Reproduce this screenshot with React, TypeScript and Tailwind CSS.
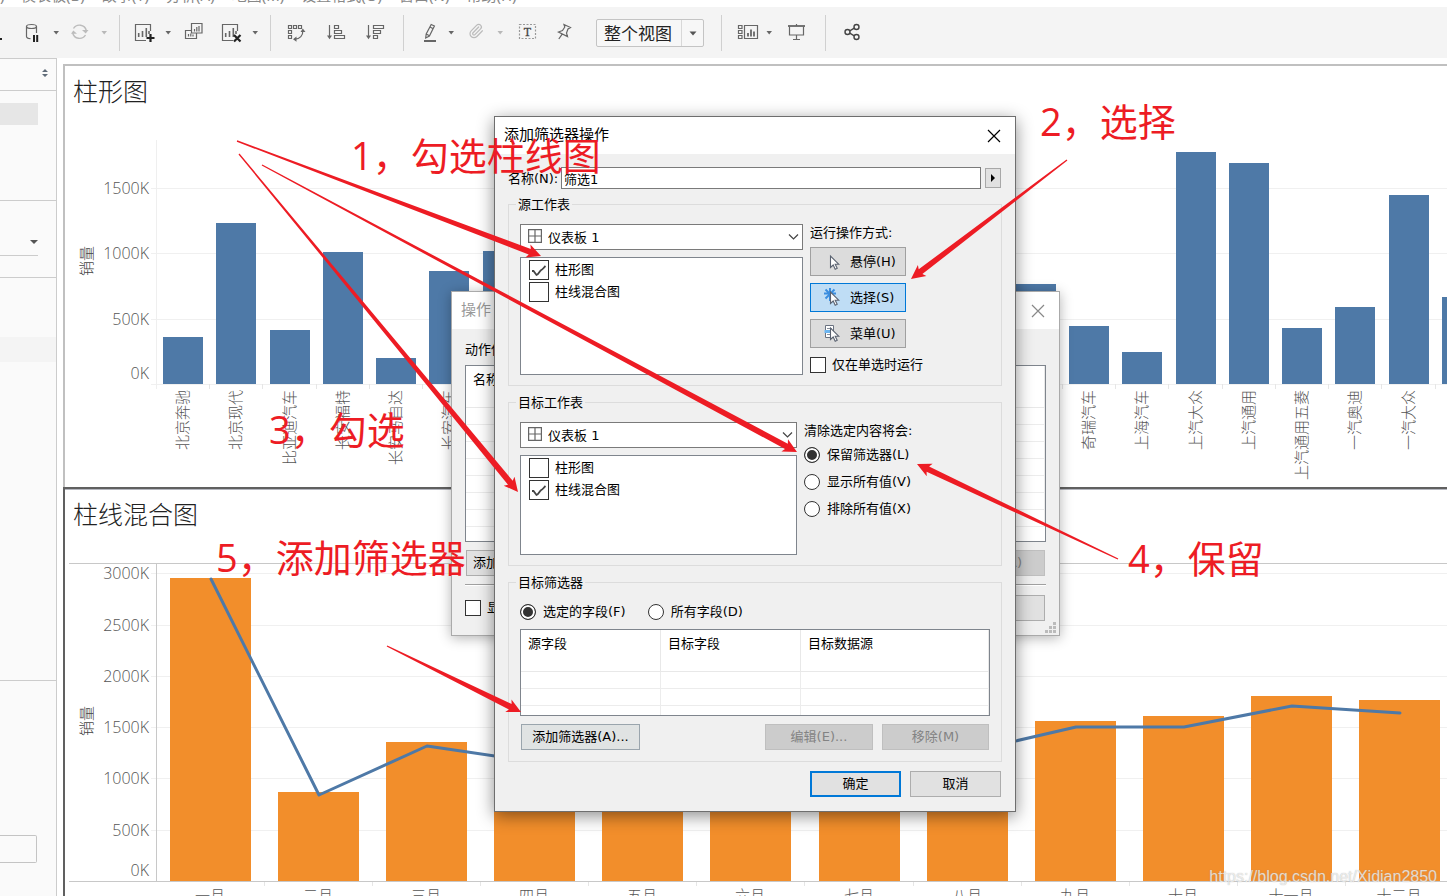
import React from "react";
import type { ReactNode } from "react";
import { Paperclip } from "lucide-react";

const INK = "#666666";

/* ---------- toolbar ---------- */

function Tool({ label, className, children }: { label: string; className: string; children: ReactNode }) {
  return (
    <button type="button" aria-label={label} className={`flex size-6 shrink-0 items-center justify-center ${className}`}>
      {children}
    </button>
  );
}

function Glyph({ children }: { children: ReactNode }) {
  return (
    <svg width="24" height="24" viewBox="0 0 24 24" fill="none" stroke={INK} strokeWidth="1.2">
      {children}
    </svg>
  );
}

function Caret({ className, pale }: { className: string; pale?: boolean }) {
  return (
    <button type="button" aria-label="展开" className={`flex h-6 w-4 shrink-0 items-center justify-center ${className}`}>
      <svg width="16" height="24" viewBox="0 0 16 24">
        <path d="M5.500 10h5.500L8.200 13.400z" fill={pale ? "#b8b8b8" : "#666"} />
      </svg>
    </button>
  );
}

function Divider({ className }: { className: string }) {
  return <div className={`h-9 w-px shrink-0 bg-[#d0d0d0] ${className}`} />;
}

function SheetFrame() {
  return (
    <>
      <path d="M17.500 10V3.500h-15v16H13" />
      <path d="M5.700 12v4M9.500 10v6M13.300 7v9M16 10v3" strokeWidth="1.600" />
    </>
  );
}

function Toolbar() {
  return (
    <div className="flex h-[51px] shrink-0 items-center bg-[#f4f4f4] pt-px">
      <div className="mt-3 h-[2px] w-[2px] shrink-0 bg-[#222]" />
      <Tool label="暂停自动更新" className="ml-[18px]">
        <Glyph>
          <ellipse cx="11.500" cy="5.500" rx="5" ry="2" />
          <path d="M6.500 5.500v10c0 1.500 1.500 2 4 2.200M16.500 5.500V12" />
          <path d="M13 14h2v7h-2zM16.200 14h2v7h-2z" fill="#222" stroke="none" />
        </Glyph>
      </Tool>
      <Caret className="ml-1" />
      <Tool label="刷新" className="ml-1">
        <Glyph>
          <g stroke="#bcbcbc" strokeWidth="1.400">
            <path d="M5.500 7.500A7 7 0 0 1 18.300 9.500M17.500 14A7 7 0 0 1 4.700 12" />
            <path d="M3 12.800L5.300 9.500l3.700 3.300zM14 9h6.500L17.700 12.500z" fill="#bcbcbc" stroke="none" />
          </g>
        </Glyph>
      </Tool>
      <Caret className="ml-1" pale />
      <Divider className="ml-[7px]" />
      <Tool label="新建工作表" className="ml-[13px]">
        <Glyph>
          <SheetFrame />
          <path d="M17.500 13v8M13.500 17h8" stroke="#222" strokeWidth="2.200" />
        </Glyph>
      </Tool>
      <Caret className="ml-[3px]" />
      <Tool label="复制工作表" className="ml-1.5">
        <Glyph>
          <path d="M9.500 2.500h10.500v9.500H9.500zM9.500 9.500h-6v8h11V12" />
          <path d="M12.500 8v2.500M14.800 6v4.500M17 5v5.500M6.500 13v2.500M8.800 12.500v3M11 13.500v2" />
        </Glyph>
      </Tool>
      <Tool label="清除工作表" className="ml-3.5">
        <Glyph>
          <SheetFrame />
          <path d="M14 14l6.500 6.500M20.500 14L14 20.500" stroke="#222" strokeWidth="2.200" />
        </Glyph>
      </Tool>
      <Caret className="ml-[3px]" />
      <Divider className="ml-[7px]" />
      <Tool label="交换行和列" className="ml-[13px]">
        <Glyph>
          <path d="M4.500 4.500h3v3h-3zM9.500 4.500h3v3h-3zM14.500 4.500h3v3h-3zM4.500 9.500h3v3h-3zM4.500 14.500h3v3h-3z" />
          <path d="M18.800 9.500c.300 5-2.800 8.500-8 8.700" />
          <path d="M16.500 11l2.300-3.500L21.500 11zM12.500 15.500L9 18.300l3.500 2.500z" fill={INK} stroke="none" />
        </Glyph>
      </Tool>
      <Tool label="升序排序" className="ml-4">
        <Glyph>
          <path d="M5.500 4v12M10.500 4.500h4v3h-4zM10.500 9.500h7v3h-7zM10.500 14.500h10v3h-10z" />
          <path d="M3 14.500h5L5.500 18.200z" fill={INK} stroke="none" />
        </Glyph>
      </Tool>
      <Tool label="降序排序" className="ml-[15px]">
        <Glyph>
          <path d="M5.500 4v12M10.500 4.500h10v3h-10zM10.500 9.500h7v3h-7zM10.500 14.500h4v3h-4z" />
          <path d="M3 14.500h5L5.500 18.200z" fill={INK} stroke="none" />
        </Glyph>
      </Tool>
      <Divider className="ml-4" />
      <Tool label="突出显示" className="ml-3.5">
        <Glyph>
          <path d="M13.200 3.500l3.200 1.500-5 10L7.700 17l.500-4zM8.200 13l3.200 1.800M12 6l3.200 1.700" />
          <path d="M6 20h12" strokeWidth="2" />
        </Glyph>
      </Tool>
      <Caret className="ml-px" />
      <Tool label="对成员分组" className="ml-[5px]">
        <Paperclip size={16} color="#bbb" strokeWidth={1.8} className="mb-1" />
      </Tool>
      <Caret className="ml-1" pale />
      <Tool label="显示标记标签" className="ml-[7px]">
        <Glyph>
          <rect x="4.500" y="3.500" width="16" height="14" stroke="#999" strokeDasharray="2 1.500" />
          <text x="12.500" y="14.500" textAnchor="middle" fontFamily="Liberation Serif, serif" fontSize="12" fill="#444" stroke="#444" strokeWidth="0.300">
            T
          </text>
        </Glyph>
      </Tool>
      <Tool label="固定轴" className="ml-[13px]">
        <Glyph>
          <path d="M12 3.500L18.500 6.500L16 8L14.500 12L15.500 15.500L6.500 11L10.500 9.500L12.800 6zM10 13.300L6.800 18" />
        </Glyph>
      </Tool>
      <div className="relative ml-5 h-7 w-[108px] shrink-0">
        <select
          aria-label="适合"
          className="h-full w-full appearance-none rounded-[2px] border border-[#c4c4c4] bg-[#f7f7f7] pl-[7px] pt-px text-[17px] leading-[26px] text-[#222]"
        >
          <option>整个视图</option>
        </select>
        <div className="pointer-events-none absolute inset-y-px right-px flex w-[22px] items-center justify-center border-l border-[#d8d8d8]">
          <svg width="8" height="5" viewBox="0 0 8 5">
            <path d="M.5.500h7L4 4.500z" fill="#555" />
          </svg>
        </div>
      </div>
      <Divider className="ml-[17px]" />
      <Tool label="智能推荐" className="ml-3.5">
        <Glyph>
          <path d="M2.500 4.500h3.500v3H2.500zM2.500 9.500h3.500v3H2.500zM2.500 14.500h3.500v3H2.500zM8.500 4.500h13v13h-13z" />
          <path d="M12 12v3.500M15 8.500v7M18 10.500v5" strokeWidth="1.800" />
        </Glyph>
      </Tool>
      <Caret className="ml-px" />
      <Tool label="演示模式" className="ml-2">
        <Glyph>
          <path d="M3 5h17" strokeWidth="1.800" />
          <path d="M11.500 3v2M4.500 5.500v8.500h14V5.500M11.500 14v4.500M8 18.500h7" />
        </Glyph>
      </Tool>
      <Divider className="ml-4" />
      <Tool label="与他人共享" className="ml-3.5">
        <Glyph>
          <g stroke="#444" strokeWidth="1.400">
            <circle cx="7.500" cy="11" r="2.500" />
            <circle cx="16.500" cy="6" r="2.500" />
            <circle cx="16.500" cy="16" r="2.500" />
            <path d="M9.700 9.800l4.600-2.600M9.700 12.200l4.600 2.600" />
          </g>
        </Glyph>
      </Tool>
    </div>
  );
}

/* ---------- charts ---------- */

const AXIS_FONT = "Open Sans, Noto Sans CJK SC, sans-serif";

const brands: { slot: number; name?: string; value: number }[] = [
  { slot: 0, name: "北京奔驰", value: 360 },
  { slot: 1, name: "北京现代", value: 1234 },
  { slot: 2, name: "比亚迪汽车", value: 414 },
  { slot: 3, name: "长安福特", value: 1011 },
  { slot: 4, name: "长安马自达", value: 199 },
  { slot: 5, name: "长安汽车", value: 866 },
  { slot: 6, value: 1019 },
  { slot: 16, value: 766 },
  { slot: 17, name: "奇瑞汽车", value: 444 },
  { slot: 18, name: "上海汽车", value: 245 },
  { slot: 19, name: "上汽大众", value: 1778 },
  { slot: 20, name: "上汽通用", value: 1694 },
  { slot: 21, name: "上汽通用五菱", value: 429 },
  { slot: 22, name: "一汽奥迪", value: 590 },
  { slot: 23, name: "一汽大众", value: 1448 },
  { slot: 24, value: 667 },
];

function BrandChart() {
  const zero = 266;
  const y = (v: number) => Math.round(zero - v * 0.1306);
  return (
    <svg className="block w-full" height="371" viewBox={undefined} fontFamily={AXIS_FONT} fontWeight="300">
      <g transform="translate(0 2)">
        {[0, 500, 1000, 1500].map((v) => (
          <g key={v}>
            <rect x="86" y={y(v)} width="100%" height="1" fill="#f0f0f0" />
            <text x="84" y={v === 0 ? 261 : y(v) + 6} textAnchor="end" fontSize="16" fill="#555">{`${v}K`}</text>
          </g>
        ))}
        <rect x="91" y="22" width="1" height="249" fill="#efefef" />
        <text transform="translate(27 143) rotate(-90)" textAnchor="middle" fontSize="15" fill="#444">
          销量
        </text>
        {brands.map((b) => {
          const x = Math.round(98 + b.slot * 53.292);
          return (
            <g key={b.slot}>
              <rect x={x} y={y(b.value)} width="40" height={zero - y(b.value)} fill="#4e79a7" />
              <rect x={x + 46} y={zero} width="1" height="5" fill="#e6e6e6" />
              {b.name && (
                <text transform={`translate(${x + 25} 272) rotate(-90)`} textAnchor="end" fontSize="15" fill="#555">
                  {b.name}
                </text>
              )}
            </g>
          );
        })}
      </g>
    </svg>
  );
}

const months = [
  { name: "一月", bar: 2950, line: 2941 },
  { name: "二月", bar: 867, line: 837 },
  { name: "三月", bar: 1353, line: 1315 },
  { name: "四月", bar: 1200, line: 1159 },
  { name: "五月", bar: 1100, line: 1070 },
  { name: "六月", bar: 1050, line: 1020 },
  { name: "七月", bar: 1000, line: 980 },
  { name: "八月", bar: 1290, line: 1256 },
  { name: "九月", bar: 1558, line: 1500 },
  { name: "十月", bar: 1607, line: 1500 },
  { name: "十一月", bar: 1801, line: 1704 },
  { name: "十二月", bar: 1762, line: 1636 },
];

function MonthChart() {
  const zero = 341;
  const x = (i: number) => Math.round(105 + i * 108.09);
  const y = (v: number) => Math.round(zero - v * 0.1026);
  return (
    <svg className="block w-full" height="372" fontFamily={AXIS_FONT} fontWeight="300">
      <g transform="translate(0 2)">
        <rect x="4" y="23" width="100%" height="1" fill="#c8c8c8" />
        {[0, 500, 1000, 1500, 2000, 2500, 3000].map((v) => (
          <g key={v}>
            {v > 0 && <rect x="86" y={y(v)} width="100%" height="1" fill="#f0f0f0" />}
            <text x="84" y={v === 0 ? 336 : y(v) + 6} textAnchor="end" fontSize="16" fill="#555">{`${v}K`}</text>
          </g>
        ))}
        <text transform="translate(27 181) rotate(-90)" textAnchor="middle" fontSize="15" fill="#444">
          销量
        </text>
        {months.map((m, i) => (
          <g key={m.name}>
            <rect x={x(i)} y={y(m.bar)} width="81" height={zero - y(m.bar)} fill="#f28e2b" />
            <rect x={x(i) + 94} y={zero} width="1" height="5" fill="#e6e6e6" />
            <text x={x(i) + 40} y="361" textAnchor="middle" fontSize="15" fill="#555">
              {m.name}
            </text>
          </g>
        ))}
        <rect x="91" y="23" width="1" height="319" fill="#c8c8c8" />
        <rect x="4" y={zero} width="100%" height="1" fill="#c8c8c8" />
        <polyline
          points={months.map((m, i) => `${x(i) + 41},${y(m.line)}`).join(" ")}
          fill="none"
          stroke="#4e79a7"
          strokeWidth="3"
          strokeLinejoin="round"
          strokeLinecap="round"
        />
      </g>
    </svg>
  );
}

/* ---------- dialog parts ---------- */

function Radio({ name, label, checked }: { name: string; label: string; checked?: boolean }) {
  return (
    <label className="flex h-4 items-center gap-[7px] whitespace-nowrap">
      <input
        type="radio"
        name={name}
        defaultChecked={checked}
        className="size-4 shrink-0 appearance-none rounded-full border border-[#333] bg-white shadow-[inset_0_0_0_2px_#fff] checked:bg-[#333]"
      />
      {label}
    </label>
  );
}

function Check({ label, checked, large }: { label: string; checked?: boolean; large?: boolean }) {
  return (
    <label className="relative flex items-center gap-1.5 whitespace-nowrap">
      <input
        type="checkbox"
        defaultChecked={checked}
        className={`peer shrink-0 appearance-none border border-[#333] bg-white ${large ? "size-5" : "size-4"}`}
      />
      <svg className="pointer-events-none absolute left-0 hidden peer-checked:block" width="20" height="20" viewBox="0 0 20 20">
        <path d="M3 11h1.500l3 4c2.500-1 3-3.800 4.500-4.800 2-.700 2.500-2.500 4.500-4.200" fill="none" stroke="#444" strokeWidth="1.800" />
      </svg>
      {label}
    </label>
  );
}

function SheetSelect({ label }: { label: string }) {
  return (
    <div className="relative h-[26px]">
      <select
        aria-label={label}
        className="h-full w-full appearance-none border border-[#7a7a7a] bg-white pl-[27px] pt-px text-[13px] leading-6 text-black"
      >
        <option>仪表板 1</option>
      </select>
      <svg className="pointer-events-none absolute left-2 top-[5px]" width="14" height="14" fill="none" stroke="#666" strokeWidth="1.200">
        <path d="M.600.600h12.800v12.800H.600zM7 .600v12.800M.600 7h12.800" />
      </svg>
      <svg className="pointer-events-none absolute right-1 top-2" width="11" height="10" fill="none" stroke="#444" strokeWidth="1.200">
        <path d="M1 2.500l4.500 4.500L10 2.500" />
      </svg>
    </div>
  );
}

function SheetList({ first, className }: { first: boolean; className: string }) {
  return (
    <div className={`mt-[7px] flex flex-col gap-0.5 border border-[#7f858d] bg-white px-2 pt-0.5 ${className}`}>
      <Check label="柱形图" checked={first} large />
      <Check label="柱线混合图" checked={!first} large />
    </div>
  );
}

function Group({ title, className, children }: { title: string; className: string; children: ReactNode }) {
  return (
    <fieldset className={`min-w-0 border border-[#dcdcdc] px-[11px] ${className}`}>
      <legend className="-ml-1 h-5 px-0.5 pt-px leading-5">{title}</legend>
      {children}
    </fieldset>
  );
}

function Cursor() {
  return <path d="M8.500 4v11.500l2.700-2.500 2 4.200 2-1-2-4h3.500z" fill="#fff" stroke="#5a6270" strokeWidth="1.100" />;
}

function RunButton({ label, active, children }: { label: string; active?: boolean; children?: ReactNode }) {
  return (
    <button
      type="button"
      className={`flex h-[29px] w-24 items-center gap-2 border pl-[11px] ${active ? "border-[#0078d7] bg-[#bfddf5]" : "border-[#a0a0a0] bg-[#dcdcdc]"}`}
    >
      <svg width="20" height="20" viewBox="0 0 20 20" className="shrink-0">
        {children}
        <Cursor />
      </svg>
      <span className="whitespace-nowrap">{label}</span>
    </button>
  );
}

function Th({ children }: { children?: ReactNode }) {
  return (
    <th scope="col" className="h-[42px] border-b border-r border-[#e8e8e8] p-0 pl-[7px] pt-1 text-left align-top font-normal leading-[19px]">
      {children}
    </th>
  );
}

function CloseCross() {
  return (
    <svg width="14" height="14" fill="none" stroke="currentColor" strokeWidth="1.200">
      <path d="M1 1l12 12M13 1L1 13" />
    </svg>
  );
}

function ActionsDialog() {
  return (
    <section
      aria-label="操作"
      className="absolute left-[451px] top-[291px] w-[609px] border border-[#aaa] bg-[#f0f0f0] text-black shadow-[0_2px_12px_rgba(0,0,0,0.3)]"
    >
      <header className="flex h-[37px] items-center justify-between bg-white pl-[9px] pr-[14px] text-[15px] text-[#999]">
        操作
        <button type="button" aria-label="关闭" className="text-[#888]">
          <CloseCross />
        </button>
      </header>
      <div className="px-[13px] pb-[14px] pt-[13px]">
        <p className="h-4 leading-4">动作使</p>
        <div className="mt-[7px] h-[177px] overflow-hidden border border-[#7f858d] bg-white">
          <table className="w-full border-separate border-spacing-0">
            <thead>
              <tr>
                <Th>名称</Th>
              </tr>
            </thead>
            <tbody>
              {[1, 2, 3, 4, 5, 6, 7].map((r) => (
                <tr key={r}>
                  <td className="h-[17px] border-b border-r border-[#ececec] p-0" />
                </tr>
              ))}
            </tbody>
          </table>
        </div>
        <div className="mt-2 flex justify-between px-px">
          <button type="button" className="h-[26px] w-28 border border-[#adadad] bg-[#e1e1e1] pl-1.5 text-left">
            添加动作
          </button>
          <button type="button" disabled className="h-[26px] w-[91px] border border-[#bfbfbf] bg-[#ccc] text-[#838383]">
            移除(R)
          </button>
        </div>
        <div className="mt-2 h-0.5 border-b border-t border-b-white border-t-[#a0a0a0]" />
        <div className="mt-[9px] flex items-center justify-between pr-px">
          <Check label="显示" />
          <button type="button" className="h-[26px] w-[91px] border border-[#adadad] bg-[#e1e1e1]">
            取消
          </button>
        </div>
      </div>
      <svg className="absolute bottom-[2px] right-[3px]" width="11" height="11" fill="#bbb">
        <path d="M8 0h3v3H8zM4 4h3v3H4zM8 4h3v3H8zM0 8h3v3H0zM4 8h3v3H4zM8 8h3v3H8z" />
      </svg>
    </section>
  );
}

function FilterDialog() {
  return (
    <section
      role="dialog"
      aria-label="添加筛选器操作"
      className="absolute left-[494px] top-[116px] w-[522px] border border-[#6e6e6e] bg-[#f0f0f0] text-black shadow-[0_4px_16px_rgba(0,0,0,0.45)]"
    >
      <header className="flex h-[37px] items-center justify-between bg-white pl-[9px] pr-[14px] text-[15px]">
        添加筛选器操作
        <button type="button" aria-label="关闭">
          <CloseCross />
        </button>
      </header>
      <div className="px-[13px] pb-[14px] pt-[13px]">
        <div className="flex items-center">
          <label htmlFor="filter-name" className="w-[53px] whitespace-nowrap pt-px">
            名称(N):
          </label>
          <input
            id="filter-name"
            defaultValue="筛选1"
            className="h-[22px] min-w-0 flex-1 border border-[#7a7a7a] bg-white px-0.5"
          />
          <button type="button" aria-label="插入" className="ml-1 mr-px flex h-5 w-4 items-center justify-center border border-[#a8a8a8] bg-[#e1e1e1]">
            <svg width="4" height="8">
              <path d="M0 0l4 4-4 4z" />
            </svg>
          </button>
        </div>

        <Group title="源工作表" className="mt-[5px] pb-[10px]">
          <div className="flex gap-[7px] pt-[10px]">
            <div className="w-[283px]">
              <SheetSelect label="源工作表" />
              <SheetList first className="h-[118px]" />
            </div>
            <div className="flex flex-col">
              <p className="h-4 pt-px leading-4">运行操作方式:</p>
              <div className="mt-[7px] flex flex-col gap-[7px]">
                <RunButton label="悬停(H)" />
                <RunButton label="选择(S)" active>
                  <path d="M8 0v13M2 5.500h12M3.500 1.500l9 9M12.500 1.500l-9 9" stroke="#3a8ee0" strokeWidth="2" />
                </RunButton>
                <RunButton label="菜单(U)">
                  <path d="M3.500 1.500h8v12h-8z" fill="#fff" stroke="#6a7280" />
                  <path d="M5 4.500h5M5 10.500h4" stroke="#8a929e" />
                  <path d="M2.500 6h7v3h-7z" fill="#6cb5f0" />
                </RunButton>
              </div>
              <div className="mt-[9px] h-4 [&>label]:h-4">
                <Check label="仅在单选时运行" />
              </div>
            </div>
          </div>
        </Group>

        <Group title="目标工作表" className="mt-1.5 pb-[10px]">
          <div className="flex gap-[7px] pt-[10px]">
            <div className="w-[277px]">
              <SheetSelect label="目标工作表" />
              <SheetList first={false} className="h-[100px]" />
            </div>
            <div className="flex flex-col">
              <p className="h-4 pt-px leading-4">清除选定内容将会:</p>
              <div className="mt-[9px] flex flex-col gap-[11px]">
                <Radio name="clear" label="保留筛选器(L)" checked />
                <Radio name="clear" label="显示所有值(V)" />
                <Radio name="clear" label="排除所有值(X)" />
              </div>
            </div>
          </div>
        </Group>

        <Group title="目标筛选器" className="mt-1.5 pb-[11px]">
          <div className="flex gap-[22px] pt-3">
            <Radio name="fields" label="选定的字段(F)" checked />
            <Radio name="fields" label="所有字段(D)" />
          </div>
          <div className="mt-[9px] h-[87px] overflow-hidden border border-[#7f858d] bg-white">
            <table className="w-full table-fixed border-separate border-spacing-0">
              <colgroup>
                <col className="w-[140px]" />
                <col className="w-[140px]" />
                <col />
              </colgroup>
              <thead>
                <tr>
                  <Th>源字段</Th>
                  <Th>目标字段</Th>
                  <Th>目标数据源</Th>
                </tr>
              </thead>
              <tbody>
                {[1, 2, 3].map((r) => (
                  <tr key={r}>
                    {[1, 2, 3].map((c) => (
                      <td key={c} className="h-[17px] border-b border-r border-[#ececec] p-0" />
                    ))}
                  </tr>
                ))}
              </tbody>
            </table>
          </div>
          <div className="mt-2 flex items-center px-px">
            <button type="button" className="h-[26px] w-[119px] border border-[#9aa5ad] bg-[#e0e3e3]">
              添加筛选器(A)...
            </button>
            <button type="button" disabled className="ml-auto h-[26px] w-[108px] border border-[#bfbfbf] bg-[#ccc] text-[#838383]">
              编辑(E)...
            </button>
            <button type="button" disabled className="ml-[9px] h-[26px] w-[107px] border border-[#bfbfbf] bg-[#ccc] text-[#838383]">
              移除(M)
            </button>
          </div>
        </Group>

        <div className="mt-[9px] flex justify-end gap-[9px] pr-px">
          <button type="button" className="h-[26px] w-[91px] border-2 border-[#0078d7] bg-[#e1e1e1]">
            确定
          </button>
          <button type="button" className="h-[26px] w-[91px] border border-[#adadad] bg-[#e1e1e1]">
            取消
          </button>
        </div>
      </div>
    </section>
  );
}

/* ---------- annotations ---------- */

const arrows = [
  [237, 141, 541, 256],
  [262, 165, 797, 452],
  [239, 154, 518, 492],
  [1067, 160, 911, 279],
  [1118, 559, 917, 464],
  [387, 646, 521, 712],
];

function arrowPoints([x1, y1, x2, y2]: number[]) {
  const len = Math.hypot(x2 - x1, y2 - y1);
  const ux = (x2 - x1) / len;
  const uy = (y2 - y1) / len;
  const at = (back: number, side: number) =>
    `${(x2 - ux * back - uy * side).toFixed(1)},${(y2 - uy * back + ux * side).toFixed(1)}`;
  return [at(0, 0), at(14, 7), at(12, 3), at(len, 0.7), at(len, -0.7), at(12, -3), at(14, -7)].join(" ");
}

function Note({ className, children }: { className: string; children: ReactNode }) {
  return (
    <p className={`absolute whitespace-nowrap font-['Open_Sans','Noto_Sans_CJK_SC',sans-serif] text-[38px] leading-[40px] text-[#ed1c24] ${className}`}>
      {children}
    </p>
  );
}

/* ---------- page ---------- */

const menus = ["仪表板(B)", "故事(T)", "分析(A)", "地图(M)", "设置格式(O)", "窗口(N)", "帮助(H)"];

export default function App() {
  return (
    <div className="relative flex h-screen flex-col overflow-hidden bg-white font-['DejaVu_Sans','Noto_Sans_CJK_SC',sans-serif] text-[13px]">
      <nav className="flex h-[7px] shrink-0 items-end gap-[17px] overflow-hidden whitespace-nowrap bg-white pb-1 font-['Noto_Sans','Noto_Sans_CJK_SC',sans-serif] text-[15px] leading-[15px] text-[#888]">
        <span className="w-1">)</span>
        {menus.map((m) => (
          <a key={m} href="#">
            {m}
          </a>
        ))}
      </nav>
      <Toolbar />

      <div className="flex min-h-0 flex-1">
        <aside className="flex w-[57px] shrink-0 flex-col border-r border-t border-[#ccc] bg-[#fafafa]">
          <div className="flex h-8 items-center justify-end border-b border-[#ccc] pb-1 pr-2">
            <svg width="6" height="8" fill="#5f6b78">
              <path d="M0 3l3-3 3 3zM0 5l3 3 3-3z" />
            </svg>
          </div>
          <div className="h-[110px] border-b border-[#ccc] pt-3">
            <div className="h-[22px] w-[38px] bg-[#e6e6e6]" />
          </div>
          <div className="h-[77px] border-b border-[#ccc]">
            <div className="flex h-[55px] w-[38px] items-end justify-end border-b border-[#ccc] pb-[11px]">
              <svg width="8" height="4" fill="#555">
                <path d="M0 0h8L4 4z" />
              </svg>
            </div>
          </div>
          <div className="h-[403px] border-b border-[#ccc] pt-[59px]">
            <div className="h-[25px] bg-[#f4f4f4]" />
          </div>
          <div className="mt-[154px] h-7 w-[37px] rounded-r-[2px] border border-l-0 border-[#c4c4c4]" />
        </aside>

        <main className="min-w-0 flex-1 overflow-hidden pl-1.5 pt-1.5">
          <section className="h-[423px] border-l-2 border-t-2 border-[#c0c0c0]">
            <h2 className="h-[50px] pl-2 font-['Noto_Sans_CJK_SC',sans-serif] text-[25px] font-light leading-[48px] text-[#222]">柱形图</h2>
            <BrandChart />
          </section>
          <section className="border-l-2 border-t-2 border-[#606060]">
            <div className="h-px bg-[#b4b6be]" />
            <h2 className="h-[48px] pl-2 font-['Noto_Sans_CJK_SC',sans-serif] text-[25px] font-light leading-[46px] text-[#222]">柱线混合图</h2>
            <MonthChart />
          </section>
        </main>
      </div>

      <ActionsDialog />
      <FilterDialog />

      <svg className="pointer-events-none absolute inset-0 h-full w-full" fill="#ed1c24">
        {arrows.map((a) => (
          <polygon key={a.join("-")} points={arrowPoints(a)} />
        ))}
      </svg>
      <Note className="left-[351px] top-[135px]">1，勾选柱线图</Note>
      <Note className="left-[1040px] top-[101px]">2，选择</Note>
      <Note className="left-[269px] top-[409px]">3，勾选</Note>
      <Note className="left-[1128px] top-[538px]">4，保留</Note>
      <Note className="left-[216px] top-[537px]">5，添加筛选器</Note>

      <p className="absolute bottom-[9px] right-[10px] font-['Liberation_Sans',sans-serif] text-[16px] leading-5 text-white/70 [text-shadow:0_0_1px_rgba(140,140,140,0.7)]">
        https://blog.csdn.net/Xidian2850
      </p>
    </div>
  );
}
